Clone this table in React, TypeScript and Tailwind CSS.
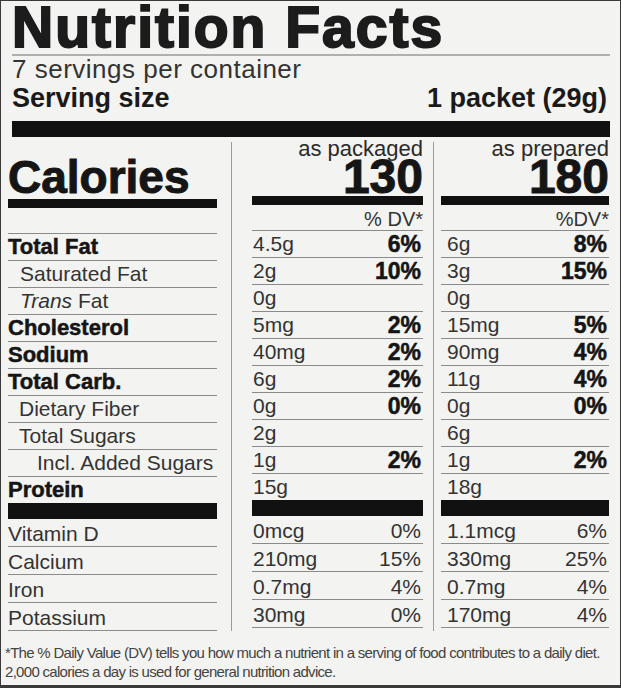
import React from 'react';

type Row = {
  label: string;
  bold?: boolean;
  trans?: boolean;
  indent?: string;
  a: string;
  ad: string;
  b: string;
  bd: string;
};

const rows: Row[] = [
  { label: 'Total Fat', bold: true, a: '4.5g', ad: '6%', b: '6g', bd: '8%' },
  { label: 'Saturated Fat', indent: 'pl-[12px]', a: '2g', ad: '10%', b: '3g', bd: '15%' },
  { label: 'Fat', trans: true, indent: 'pl-[12px]', a: '0g', ad: '', b: '0g', bd: '' },
  { label: 'Cholesterol', bold: true, a: '5mg', ad: '2%', b: '15mg', bd: '5%' },
  { label: 'Sodium', bold: true, a: '40mg', ad: '2%', b: '90mg', bd: '4%' },
  { label: 'Total Carb.', bold: true, a: '6g', ad: '2%', b: '11g', bd: '4%' },
  { label: 'Dietary Fiber', indent: 'pl-[11px]', a: '0g', ad: '0%', b: '0g', bd: '0%' },
  { label: 'Total Sugars', indent: 'pl-[11px]', a: '2g', ad: '', b: '6g', bd: '' },
  { label: 'Incl. Added Sugars', indent: 'pl-[29px]', a: '1g', ad: '2%', b: '1g', bd: '2%' },
  { label: 'Protein', bold: true, a: '15g', ad: '', b: '18g', bd: '' },
];

const vitamins = [
  ['Vitamin D', '0mcg', '0%', '1.1mcg', '6%'],
  ['Calcium', '210mg', '15%', '330mg', '25%'],
  ['Iron', '0.7mg', '4%', '0.7mg', '4%'],
  ['Potassium', '30mg', '0%', '170mg', '4%'],
];

function rowClass(i: number) {
  return i === rows.length - 1 ? 'h-[26px]' : 'h-[27px] border-b border-[#8a8a8a]';
}

function LabelColumn() {
  return (
    <div className="w-[209px] shrink-0">
      <div className="h-[57px] pt-[13px]">
        <div className="text-[46px] leading-[44px] font-bold text-[#151515] [-webkit-text-stroke:1px_#151515]">Calories</div>
      </div>
      <div className="h-[9px] bg-[#111]" />
      <div className="h-[26px] border-b border-[#8a8a8a]" />
      {rows.map((r, i) => (
        <div key={r.label} className={`${rowClass(i)} ${r.indent ?? ''}`}>
          {r.bold ? (
            <span className="text-[22px] leading-[26px] font-bold text-[#151515] [-webkit-text-stroke:0.5px_#151515]">{r.label}</span>
          ) : r.trans ? (
            <span className="text-[21px] leading-[26px] text-[#333]">
              <i>Trans</i> {r.label}
            </span>
          ) : (
            <span className="text-[21px] leading-[26px] text-[#333]">{r.label}</span>
          )}
        </div>
      ))}
      <div className="h-[16px] bg-[#111]" />
      {vitamins.map((v) => (
        <div key={v[0]} className="h-[28px] border-b border-[#8a8a8a] text-[21px] leading-[29px] text-[#333]">
          {v[0]}
        </div>
      ))}
    </div>
  );
}

function ValueColumn({ title, total, dv, which, inset }: { title: string; total: string; dv: string; which: 'a' | 'b'; inset: string }) {
  return (
    <div className="w-full">
      <div className="h-[57px]">
        <div className="mt-[-3px] text-right text-[22px] leading-[20px] text-[#2a2a2a]">{title}</div>
        <div className="text-right text-[48px] leading-[36px] font-bold text-[#151515] [-webkit-text-stroke:1px_#151515]">{total}</div>
      </div>
      <div className="h-[9px] bg-[#111]" />
      <div className="h-[26px] border-b border-[#8a8a8a] text-right text-[20px] leading-[28px] text-[#333]">{dv}</div>
      {rows.map((r, i) => {
        const val = which === 'a' ? r.a : r.b;
        const pct = which === 'a' ? r.ad : r.bd;
        return (
          <div key={r.label} className={`${rowClass(i)} ${inset} flex justify-between items-start`}>
            <span className="text-[21px] leading-[26px] text-[#333]">{val}</span>
            <span className="text-[23px] leading-[26px] font-bold text-[#151515] [-webkit-text-stroke:0.5px_#151515]">{pct}</span>
          </div>
        );
      })}
      <div className="h-[16px] bg-[#111]" />
      {vitamins.map((v) => (
        <div key={v[0]} className={`h-[28px] border-b border-[#8a8a8a] ${inset} flex justify-between text-[21px] leading-[29px] text-[#333]`}>
          <span>{which === 'a' ? v[1] : v[3]}</span>
          <span>{which === 'a' ? v[2] : v[4]}</span>
        </div>
      ))}
    </div>
  );
}

export default function App() {
  return (
    <div className="w-[621px] h-[688px] bg-[#f3f3f1] border border-b-[3px] border-[#3a3a3a] overflow-hidden [font-family:'Liberation_Sans',Arial,sans-serif]">
      <div className="ml-[11px] mr-[10px]">
        <div className="pt-[2px] text-[57px] leading-[48px] font-bold tracking-[2px] text-[#1c1c1c] [-webkit-text-stroke:2px_#1c1c1c]">
          Nutrition Facts
        </div>
        <div className="mt-[3px] h-[2px] bg-[#b0b0b0]" />
        <div className="text-[26px] leading-[26px] tracking-[0.5px] text-[#333]">7 servings per container</div>
        <div className="flex justify-between pr-[3px] text-[27px] leading-[33px] font-bold text-[#1a1a1a]">
          <span>Serving size</span>
          <span>1 packet (29g)</span>
        </div>
        <div className="mt-[6px] h-[16px] bg-[#111]" />
      </div>

      <div className="mt-[5px] ml-[7px] flex">
        <LabelColumn />
        <div className="ml-[14px] border-l border-[#9a9a9a] pl-[20px] w-[192px] shrink-0">
          <ValueColumn title="as packaged" total="130" dv="% DV*" which="a" inset="pl-[1px] pr-[2px]" />
        </div>
        <div className="ml-[10px] border-l border-[#9a9a9a] pl-[7px] w-[176px] shrink-0">
          <ValueColumn title="as prepared" total="180" dv="%DV*" which="b" inset="pl-[6px] pr-[2px]" />
        </div>
      </div>

      <div className="mt-[12px] ml-[4px] text-[15px] leading-[19px] tracking-[-0.7px] text-[#444] whitespace-nowrap">
        <div>*The % Daily Value (DV) tells you how much a nutrient in a serving of food contributes to a daily diet.</div>
        <div>2,000 calories a day is used for general nutrition advice.</div>
      </div>
    </div>
  );
}
